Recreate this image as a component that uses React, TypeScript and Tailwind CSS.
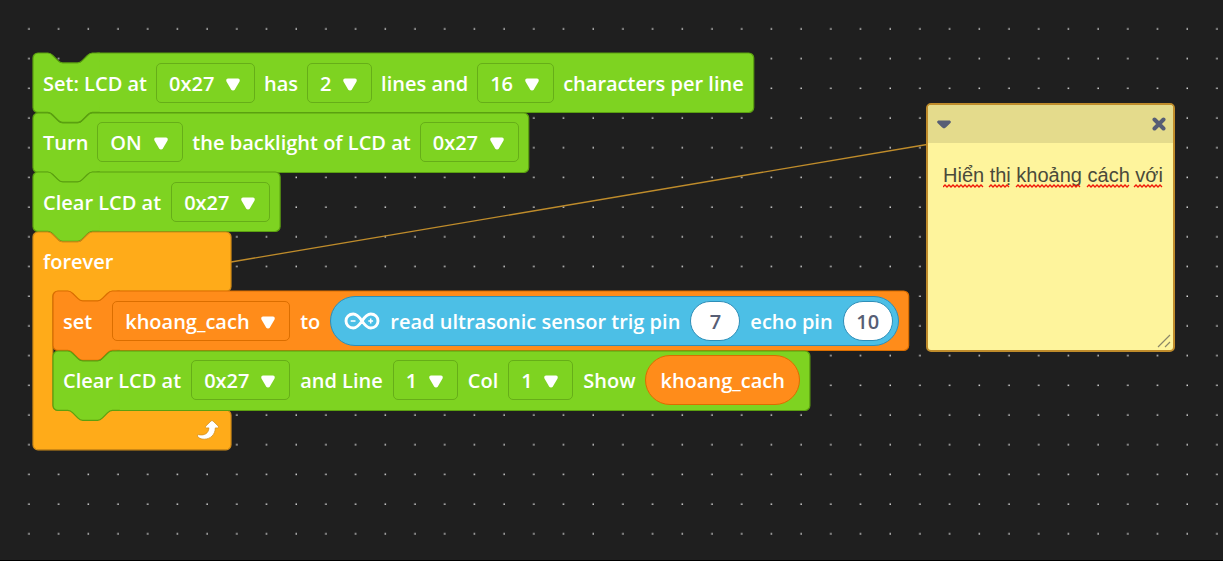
import React from "react";

const CAP = "V4 A4 4 0 0 1 4 0 H12 c2 0 3 1 4 2 l4 4 c1 1 2 2 4 2 h12 c2 0 3 -1 4 -2 l4 -4 c1 -1 2 -2 4 -2";
const TAB = "c-2 0 -3 1 -4 2 l-4 4 c-1 1 -2 2 -4 2 h-12 c-2 0 -3 -1 -4 -2 l-4 -4 c-1 -1 -2 -2 -4 -2";

const tones = {
  green: "fill-[#7ed321] stroke-[#5ba010]",
  orange: "fill-[#ff8c1a] stroke-[#db6e00]",
};
const fieldTones = { green: "border-[#66ae18]", orange: "border-[#db6e00]" };

type Tone = "green" | "orange";

interface BlockProps {
  tone: Tone;
  gap?: string;
  className?: string;
  children: React.ReactNode;
}

function Block({ tone, gap = "gap-[10px]", className = "", children }: BlockProps) {
  return (
    <div className={`relative flex w-max items-center px-[10px] ${gap} ${className}`}>
      <svg className={`absolute inset-0 h-full w-full overflow-visible ${tones[tone]}`} aria-hidden="true">
        <rect x="60" y="0" rx="5" className="h-full w-[calc(100%-60px)]" strokeWidth="1.2" />
        <g transform="scale(1.2375)">
          <path d={`M0 44 ${CAP} H54 V48 H48 ${TAB} H4 A4 4 0 0 1 0 44 Z`} stroke="none" />
          <path d={`M54 48 H48 ${TAB} H4 A4 4 0 0 1 0 44 ${CAP} H54`} fill="none" strokeWidth="1" />
        </g>
      </svg>
      {children}
    </div>
  );
}

function Label({ children }: { children: React.ReactNode }) {
  return <span className="relative pt-[2px] whitespace-nowrap">{children}</span>;
}

function Field({ tone = "green", label, value, width }: { tone?: Tone; label: string; value: string; width: string }) {
  return (
    <span className={`relative h-[40px] ${width}`}>
      <select
        aria-label={label}
        defaultValue={value}
        className={`h-full w-full appearance-none rounded-[5px] border bg-transparent pt-[2px] pl-[12px] outline-none ${fieldTones[tone]}`}
      >
        <option>{value}</option>
      </select>
      <svg viewBox="0 0 14 13" className="pointer-events-none absolute top-[15px] right-[15px] h-[13px] w-[14px] fill-white" aria-hidden="true">
        <path d="M2 .4 H12 C13.7 .4 14.2 2.2 13.4 3.7 L9 11.2 C8 12.8 6 12.8 5 11.2 L.6 3.7 C-.2 2.2 .3 .4 2 .4 Z" />
      </svg>
    </span>
  );
}

function Pin({ label, value }: { label: string; value: string }) {
  return (
    <input
      aria-label={label}
      defaultValue={value}
      className="h-[40px] w-[50px] rounded-full border border-[#2e8eb8] bg-white pt-[2px] text-center font-semibold text-[#575e75] outline-none"
    />
  );
}

function BoardLogo() {
  return (
    <svg viewBox="0 0 36 18" className="h-[18px] w-[36px]" fill="none" stroke="white" aria-hidden="true">
      <path
        d="M18 9 C15 4.5 12.5 2 9.3 2 C5 2 2 5.2 2 9 S5 16 9.3 16 C12.5 16 15 13.5 18 9 C21 4.5 23.5 2 26.7 2 C31 2 34 5.2 34 9 S31 16 26.7 16 C23.5 16 21 13.5 18 9 Z"
        strokeWidth="2.9"
      />
      <path d="M6.7 9 H11.5 M24.3 9 H29.1 M26.7 6.6 V11.4" strokeWidth="1.5" />
    </svg>
  );
}

const squiggles = [
  [0, 41],
  [46, 67],
  [73, 138],
  [144, 186],
  [191, 219],
];

function squiggle(from: number, to: number) {
  let d = `M${from} 3`;
  for (let x = from + 2, up = true; x <= to; x += 2, up = !up) d += ` L${x} ${up ? 1 : 3}`;
  return d;
}

function Note() {
  return (
    <section
      aria-label="Comment"
      className="absolute top-[103px] left-[926px] flex h-[249px] w-[249px] flex-col overflow-hidden rounded-[5px] border-2 border-[#bf8c2b] bg-[#fef49c]"
    >
      <header className="flex h-[38px] shrink-0 items-center justify-between bg-[#e4db8c] pr-[7px] pl-[9px]">
        <button aria-label="Collapse comment">
          <svg viewBox="0 0 14 9" className="h-[9px] w-[14px] fill-[#575e75]">
            <path d="M2 .5 H12 C13.8 .5 14.4 2 13.2 3.2 L8.8 7.6 C7.7 8.7 6.3 8.7 5.2 7.6 L.8 3.2 C-.4 2 .2 .5 2 .5 Z" />
          </svg>
        </button>
        <button aria-label="Delete comment">
          <svg viewBox="0 0 14 14" className="h-[14px] w-[14px]" stroke="#575e75" strokeWidth="4" strokeLinecap="round">
            <path d="M2.5 2.5 L11.5 11.5 M11.5 2.5 L2.5 11.5" />
          </svg>
        </button>
      </header>
      <div className="relative flex-1">
        <textarea
          aria-label="Comment text"
          spellCheck={false}
          defaultValue="Hiển thị khoảng cách với"
          className="block h-full w-full resize-none bg-transparent pt-[20px] pl-[15px] font-['Liberation_Sans',sans-serif] text-[20px] leading-[24px] font-normal text-[#4a4a3a] outline-none"
        />
        <svg viewBox="0 0 220 4" className="pointer-events-none absolute top-[41px] left-[15px] h-[4px] w-[220px]" fill="none" stroke="#f01808" strokeWidth="1.3" aria-hidden="true">
          {squiggles.map(([a, b]) => (
            <path key={a} d={squiggle(a, b)} />
          ))}
        </svg>
        <svg viewBox="0 0 14 14" className="pointer-events-none absolute right-[2px] bottom-[2px] h-[14px] w-[14px]" stroke="#8b8768" strokeWidth="1.2" aria-hidden="true">
          <path d="M1 13 L13 1 M8 13 L13 8" />
        </svg>
      </div>
    </section>
  );
}

export default function App() {
  return (
    <main className="relative min-h-screen overflow-hidden border-b border-black bg-[#1f1f1f] font-['Open_Sans','Noto_Sans',sans-serif] text-[20px] font-semibold text-white">
      <svg className="absolute inset-0 h-full w-full" aria-hidden="true">
        <defs>
          <pattern id="grid" width="24" height="24" patternUnits="userSpaceOnUse" patternTransform="scale(1.2375)">
            <rect x="22.8" y="22.8" width="1.2" height="1.2" fill="#dddddd" />
          </pattern>
        </defs>
        <rect width="100%" height="100%" fill="url(#grid)" />
        <path d="M231 262 L927 144.5" stroke="#bf8c2b" strokeWidth="1.3" />
      </svg>

      <div className="relative ml-[33px] mt-[53px] grid h-[396px] w-max grid-rows-[repeat(6,minmax(0,1fr))_39px]">
        <Block tone="green" gap="gap-[9px]">
          <Label>Set: LCD at</Label>
          <Field label="LCD address" value="0x27" width="w-[99px]" />
          <Label>has</Label>
          <Field label="Line count" value="2" width="w-[65px]" />
          <Label>lines and</Label>
          <Field label="Characters" value="16" width="w-[77px]" />
          <Label>characters per line</Label>
        </Block>
        <Block tone="green" gap="gap-[9px]">
          <Label>Turn</Label>
          <Field label="Backlight state" value="ON" width="w-[86px]" />
          <Label>the backlight of LCD at</Label>
          <Field label="LCD address" value="0x27" width="w-[99px]" />
        </Block>
        <Block tone="green">
          <Label>Clear LCD at</Label>
          <Field label="LCD address" value="0x27" width="w-[99px]" />
        </Block>

        <div className="relative row-span-4 grid grid-rows-subgrid">
          <svg className="absolute inset-0 h-full w-full overflow-visible" aria-hidden="true">
            <path
              transform="scale(1.2375)"
              d={`M0 172 ${CAP} H156 a4 4 0 0 1 4 4 V44 a4 4 0 0 1 -4 4 H64 ${TAB} H20 a4 4 0 0 0 -4 4 V140 a4 4 0 0 0 4 4 H156 a4 4 0 0 1 4 4 V172 a4 4 0 0 1 -4 4 H4 a4 4 0 0 1 -4 -4 Z`}
              fill="#ffab19"
              stroke="#cf8b17"
              strokeWidth="1"
            />
          </svg>
          <div className="flex items-center pl-[10px]">
            <Label>forever</Label>
          </div>
          <Block tone="orange" className="ml-[20px]">
            <Label>set</Label>
            <span className="w-0" />
            <Field tone="orange" label="Variable" value="khoang_cach" width="w-[178px]" />
            <Label>to</Label>
            <div className="relative flex h-[50px] items-center gap-[10px] rounded-full border border-[#2e8eb8] bg-[#4cbfe6] pr-[5px] pl-[13px]">
              <BoardLogo />
              <Label>read ultrasonic sensor trig pin</Label>
              <Pin label="Trigger pin" value="7" />
              <Label>echo pin</Label>
              <Pin label="Echo pin" value="10" />
            </div>
          </Block>
          <Block tone="green" className="ml-[20px]">
            <Label>Clear LCD at</Label>
            <Field label="LCD address" value="0x27" width="w-[99px]" />
            <Label>and Line</Label>
            <Field label="Line" value="1" width="w-[65px]" />
            <Label>Col</Label>
            <Field label="Column" value="1" width="w-[65px]" />
            <Label>Show</Label>
            <span className="relative flex h-[50px] items-center rounded-full border border-[#db6e00] bg-[#ff8c1a] px-[14px]">
              <Label>khoang_cach</Label>
            </span>
          </Block>
          <div className="relative flex w-[198px] items-center justify-end pr-[12px]">
            <svg viewBox="0 0 22 20" className="h-[20px] w-[22px] fill-white stroke-[#cf8b17]" strokeWidth=".7" strokeLinejoin="round" aria-hidden="true">
              <path d="M14 1 Q15 0 16 1 L21.3 6.2 Q22 7.6 20.6 7.9 H18.3 C18.2 14.6 13.6 19 7.4 19.2 C4 19.3 1.3 18 .4 16 Q0 14.6 1.6 14.7 C7.4 15.8 11.6 13.4 11.9 7.9 H9.4 Q7.9 7.6 8.7 6.2 Z" />
            </svg>
          </div>
        </div>
      </div>

      <Note />
    </main>
  );
}
